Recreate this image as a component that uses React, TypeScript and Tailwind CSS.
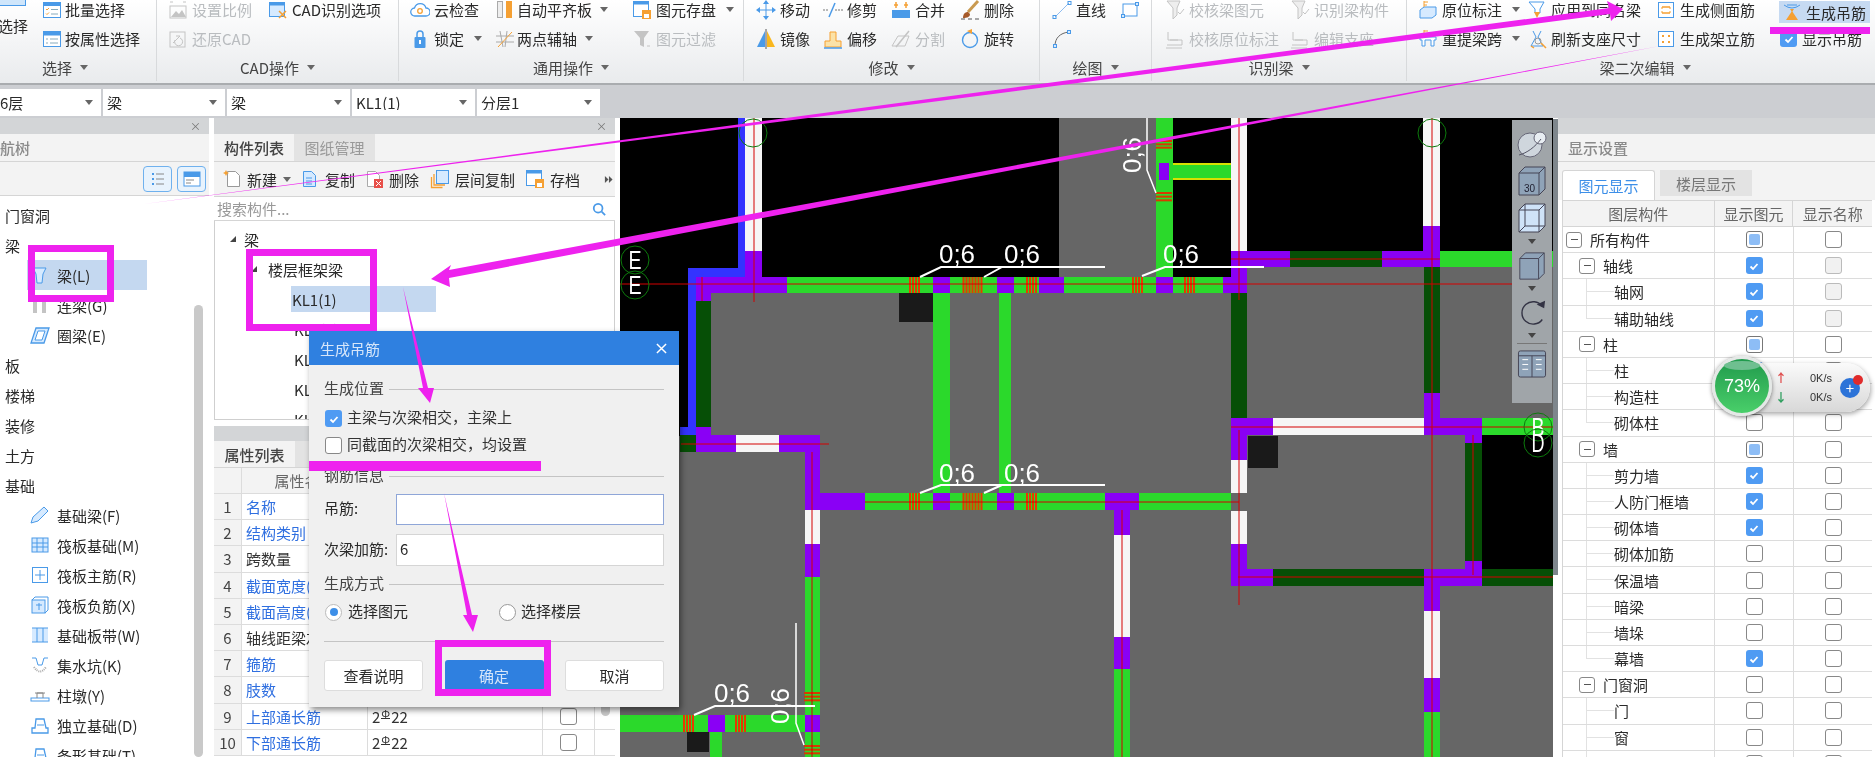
import React from "react";

type IP = { children?: React.ReactNode };
const S = ({ children }: IP) => (
  <svg viewBox="0 0 20 20" fill="none" className="w-[20px] h-[20px] shrink-0">{children}</svg>
);
const BL = "#4a9ae8", OR = "#f5a033", GR = "#c4c4c4", LB = "#d6eaff";

const I: Record<string, React.ReactNode> = {
  batch: <S><rect x="1.5" y="2.5" width="17" height="15" fill="#fff" stroke={BL} /><rect x="1.5" y="2.5" width="17" height="3.5" fill={BL} /><path d="M4 9l1 1 2-2M4 13.500l1 1 2-2" stroke={OR} /><path d="M9 9.500h7M9 14h7" stroke="#8ab" /></S>,
  attr: <S><rect x="1.5" y="2.5" width="17" height="15" fill="#fff" stroke={BL} /><rect x="1.5" y="2.5" width="17" height="4" fill={BL} /><path d="M4 10h2M8 10h8M4 14h2M8 14h8" stroke="#8ab" /></S>,
  ratio: <S><rect x="2" y="6" width="16" height="12" stroke={GR} /><path d="M3 17l5-6 3 3 3-4 4 7z" fill={GR} /><path d="M2 2h3M15 2h3" stroke={GR} /></S>,
  cad: <S><rect x="1.500" y="2.500" width="15" height="14" fill={LB} stroke={BL} /><rect x="1.5" y="2.5" width="15" height="3" fill={BL} /><path d="M11 11l7 7M18 11l-7 7" stroke={OR} strokeWidth="1.500" /></S>,
  restore: <S><rect x="2" y="3" width="15" height="15" stroke={GR} /><path d="M5 14l7-7M12 7H8M7 11a4 4 0 1 0 5-2" stroke={GR} /></S>,
  cloud: <S><path d="M5 16a4 4 0 0 1-.5-8A6 6 0 0 1 16 8a4 4 0 0 1 0 8z" fill="#fff" stroke={BL} strokeWidth="1.300" /><circle cx="10" cy="11" r="2.300" stroke={OR} strokeWidth="1.300" /></S>,
  align: <S><rect x="2.500" y="1.500" width="5" height="16" fill="#eee" stroke="#aaa" /><rect x="11" y="1" width="6" height="17" fill={OR} /></S>,
  lock: <S><rect x="4.500" y="8" width="11" height="11" rx="1" fill={BL} /><path d="M7 8V5a3 3 0 0 1 6 0v3" stroke={BL} strokeWidth="1.500" /><path d="M10 11v4" stroke="#fff" strokeWidth="2" /></S>,
  axis: <S><path d="M5 2l3 16M12 2l-2 16M1 7h18M1 13h18" stroke="#aaa" /><path d="M17 3L3 18" stroke={OR} /></S>,
  store: <S><rect x="1.500" y="1.500" width="15" height="15" fill="#fff" stroke={BL} /><rect x="1.5" y="1.500" width="15" height="3" fill={BL} /><rect x="10" y="10" width="9" height="9" fill={OR} /><rect x="12" y="14" width="5" height="4" fill="#fff" /></S>,
  filter: <S><path d="M2 2h15l-5 7v9l-4-2V9z" fill={GR} /><path d="M15 17h3" stroke={GR} /></S>,
  move: <S><path d="M10 3v14M3 10h14" stroke={BL} /><path d="M10 0l3 4H7zM10 20l3-4H7zM0 10l4-3v6zM20 10l-4-3v6z" fill={BL} /></S>,
  trim: <S><path d="M0 10h6M12 10h8" stroke="#777" strokeDasharray="2 1" /><path d="M6 17l6-14" stroke={BL} strokeWidth="1.500" /></S>,
  merge: <S><rect x="1" y="10" width="18" height="8" fill={BL} /><path d="M5 2v6M15 2v6M3 5h4M13 5h4" stroke={OR} strokeWidth="1.500" /></S>,
  brush: <S><path d="M18 1L8 12" stroke="#c99a50" strokeWidth="3" /><path d="M3 18c0-4 2-6 5-6l2 2c0 3-3 4-7 4z" fill="#a65a2a" /><path d="M1 19h18" stroke="#555" strokeDasharray="4 3" /></S>,
  mirror: <S><path d="M9 2L1 18h8z" fill={BL} /><path d="M11 2l8 16h-8z" fill="#f9b71e" /><path d="M10 0v20" stroke="#555" /></S>,
  offset: <S><path d="M2 18v-6h5V3h6v9h5v6z" fill="#fbe2a8" stroke={OR} /><path d="M1 19h18" stroke={BL} strokeWidth="1.500" /></S>,
  split: <S><path d="M1 17l6-10h11l-4 10z" stroke={GR} /><path d="M18 2L5 18" stroke={GR} strokeWidth="1.500" /></S>,
  rotate: <S><circle cx="10" cy="11" r="7.500" stroke={BL} strokeWidth="1.400" /><path d="M7 2l5-2v5z" fill={OR} /></S>,
  line: <S><path d="M3 17L17 3" stroke="#8fbcef" /><rect x="1" y="15.500" width="3" height="3" stroke={BL} /><rect x="16" y="1.500" width="3" height="3" stroke={BL} /></S>,
  rect: <S><rect x="3" y="4" width="14" height="12" stroke={BL} fill="#fff" /><rect x="1.500" y="14.500" width="3" height="3" fill={LB} stroke={BL} /><rect x="15.500" y="2.500" width="3" height="3" fill={LB} stroke={BL} /></S>,
  curve: <S><path d="M3 17C3 9 8 4 17 3" stroke="#666" /><rect x="1.500" y="15.500" width="3" height="3" fill={LB} stroke={BL} /><rect x="15.500" y="1.500" width="3" height="3" fill={LB} stroke={BL} /></S>,
  ck1: <S><path d="M2 1h13l-3 7v7l-4 4v-11z" stroke={GR} fill="#eee" /><path d="M13 12l2 2 4-5" stroke={GR} /></S>,
  ck2: <S><path d="M3 3v8h10M2 16h15v-5H5" stroke={GR} /><path d="M1 19h16" stroke={GR} /></S>,
  orig: <S><path d="M2 10l4-3h12v8l-4 3H2z" fill={LB} stroke={BL} /><path d="M6 1v6M6 2h4M6 5h3" stroke={OR} /></S>,
  apply: <S><path d="M2 2h15l-4 7v4H8V9z" fill="#fff" stroke={BL} /><path d="M7 12h6l-3 6z" fill={OR} /></S>,
  respan: <S><path d="M2 8h16v3h-2v6h-3v-6H7v6H4v-6H2z" fill="#fff" stroke={BL} /><path d="M6 1v6M6 2h4" stroke={OR} /></S>,
  refresh: <S><path d="M6 2l3 6-5 9h12l-5-9 3-6" stroke={BL} /><circle cx="11" cy="12" r="3" stroke="#999" /><path d="M4 17l3 2M14 14l5 5" stroke={OR} strokeWidth="1.500" /></S>,
  side: <S><rect x="2.500" y="2.500" width="15" height="15" fill="#fff" stroke={BL} /><path d="M6 7h8M6 13h8" stroke={OR} strokeWidth="1.500" /><path d="M6 7v2M14 7v2M6 11v2M14 11v2" stroke={OR} /></S>,
  erect: <S><rect x="2.500" y="2.500" width="15" height="15" fill="#fff" stroke={BL} /><path d="M7 6v2M13 6v2M7 12v2M13 12v2" stroke={OR} strokeWidth="2" /></S>,
  hang: <S><path d="M2 3q8 6 16 0" stroke={BL} /><path d="M5 3h10" stroke={BL} /><path d="M10 9l6 9H4z" fill={OR} /><path d="M8 7h4l-2 3z" fill={OR} /></S>,
  newdoc: <S><path d="M5.500 2.500h8l4 4v11h-12z" fill="#fff" stroke="#999" /><path d="M4 1l1 2 2 1-2 1-1 2-1-2-2-1 2-1z" fill={OR} /></S>,
  copydoc: <S><path d="M3.500 2.500h8l4 4v11h-12z" fill={LB} stroke={BL} /><path d="M6 9h6M6 12h6M6 15h6" stroke={BL} /></S>,
  deldoc: <S><path d="M3.500 2.500h8l4 4v11h-12z" fill="#fff" stroke="#aaa" /><rect x="10" y="10" width="9" height="9" fill="#e8504a" /><path d="M12 12l5 5M17 12l-5 5" stroke="#fff" /></S>,
  layer: <S><rect x="6.500" y="1.500" width="12" height="13" fill={LB} stroke={BL} /><path d="M4 5v11h11M1.500 8v10.500h11" stroke={OR} strokeWidth="1.300" /></S>,
};

const Caret = ({ c = "ml-[6px]" }: { c?: string }) => (
  <svg viewBox="0 0 8 5" className={"w-[8px] h-[5px] shrink-0 " + c}><path d="M0 0h8L4 5z" fill="#666" /></svg>
);

const Item = ({ icon, text, w, gray, caret, gap = "gap-[4px]" }: { icon: string; text?: string; w: string; gray?: boolean; caret?: boolean; gap?: string }) => (
  <div className={`flex items-center shrink-0 ${gap} ${w} ${gray ? "text-[#b9bcbf]" : ""}`}>
    {I[icon]}
    {text && <span className="whitespace-nowrap">{text}</span>}
    {caret && <Caret />}
  </div>
);

const Group = ({ w, pad, label, last, rows }: { w: string; pad: string; label: string; last?: boolean; rows: React.ReactNode[] }) => (
  <div className={`${w} shrink-0 h-[81px] flex flex-col ${last ? "" : "border-r border-[#d8dadc]"}`}>
    <div className={`flex h-[29px] items-center -mt-[5px] ${pad}`}>{rows[0]}</div>
    <div className={`flex h-[29px] items-center ${pad}`}>{rows[1]}</div>
    <div className="flex-1 flex items-center justify-center text-[#444] mt-[1px]">{label}<Caret c="ml-[8px]" /></div>
  </div>
);

const Ribbon = () => (
  <div className="h-[85px] shrink-0 bg-gradient-to-b from-[#ffffff] to-[#e9ebed] border-b-2 border-[#a9acaf] flex overflow-hidden">
    <div className="-ml-[26px] w-[183px] shrink-0 h-[81px] relative border-r border-[#d8dadc] flex">
      <div className="w-[68px] pl-[24px] shrink-0 flex flex-col">
        <div className="h-[6px] w-[28px] bg-[#cfe6fb] border-b border-r border-[#4a9ae8]" />
        <div className="mt-[12px]">选择</div>
      </div>
      <div className="flex-1 flex flex-col">
        <div className="h-[29px] -mt-[5px] flex items-center"><Item icon="batch" text="批量选择" w="w-[110px]" gap="gap-[3px]" /></div>
        <div className="h-[29px] flex items-center"><Item icon="attr" text="按属性选择" w="w-[110px]" gap="gap-[3px]" /></div>
      </div>
      <div className="absolute left-[68px] top-[60px] flex items-center text-[#444]">选择<Caret c="ml-[8px]" /></div>
    </div>
    <Group w="w-[242px]" pad="pl-[11px]" label="CAD操作" rows={[
      <><Item icon="ratio" text="设置比例" w="w-[100px]" gray /><Item icon="cad" text="CAD识别选项" w="w-[125px]" /></>,
      <Item icon="restore" text="还原CAD" w="w-[100px]" gray />,
    ]} />
    <Group w="w-[345px]" pad="pl-[11px]" label="通用操作" rows={[
      <><Item icon="cloud" text="云检查" w="w-[85px]" /><Item icon="align" text="自动平齐板" w="w-[137px]" caret gap="gap-[2px]" /><Item icon="store" text="图元存盘" w="w-[105px]" caret /></>,
      <><Item icon="lock" text="锁定" w="w-[85px]" caret /><Item icon="axis" text="两点辅轴" w="w-[137px]" caret gap="gap-[2px]" /><Item icon="filter" text="图元过滤" w="w-[105px]" gray /></>,
    ]} />
    <Group w="w-[296px]" pad="pl-[12px]" label="修改" rows={[
      <><Item icon="move" text="移动" w="w-[67px]" /><Item icon="trim" text="修剪" w="w-[68px]" /><Item icon="merge" text="合并" w="w-[69px]" /><Item icon="brush" text="删除" w="w-[60px]" /></>,
      <><Item icon="mirror" text="镜像" w="w-[67px]" /><Item icon="offset" text="偏移" w="w-[68px]" /><Item icon="split" text="分割" w="w-[69px]" gray /><Item icon="rotate" text="旋转" w="w-[60px]" /></>,
    ]} />
    <Group w="w-[112px]" pad="pl-[12px]" label="绘图" rows={[
      <><Item icon="line" text="直线" w="w-[68px]" /><Item icon="rect" w="w-[20px]" /></>,
      <Item icon="curve" w="w-[20px]" />,
    ]} />
    <Group w="w-[255px]" pad="pl-[13px]" label="识别梁" rows={[
      <><Item icon="ck1" text="校核梁图元" w="w-[125px]" gray /><Item icon="ck1" text="识别梁构件" w="w-[110px]" gray /></>,
      <><Item icon="ck2" text="校核原位标注" w="w-[125px]" gray /><Item icon="ck2" text="编辑支座" w="w-[110px]" gray /></>,
    ]} />
    <Group w="w-[476px]" pad="pl-[11px]" label="梁二次编辑" last rows={[
      <><Item icon="orig" text="原位标注" w="w-[109px]" caret /><Item icon="apply" text="应用到同名梁" w="w-[129px]" /><Item icon="side" text="生成侧面筋" w="w-[123px]" />
        <div className="w-[91px] h-[22px] mt-[5px] bg-[#c6daf2] flex items-center pl-[3px] gap-[4px] shrink-0">{I.hang}<span className="whitespace-nowrap">生成吊筋</span></div></>,
      <><Item icon="respan" text="重提梁跨" w="w-[109px]" caret /><Item icon="refresh" text="刷新支座尺寸" w="w-[129px]" /><Item icon="erect" text="生成架立筋" w="w-[123px]" />
        <div className="flex items-center gap-[5px] pl-[1px]"><Box t="check" /><span className="whitespace-nowrap">显示吊筋</span></div></>,
    ]} />
  </div>
);

const Combo = ({ t, w }: { t: string; w: string }) => (
  <div className={`${w} h-[27px] bg-white flex items-center justify-between pl-[4px] pr-[8px] shrink-0`}>
    <span className="truncate">{t}</span><Caret c="" />
  </div>
);

const Bar = () => (
  <div className="h-[33px] shrink-0 bg-[#ccced2] pt-[4px] flex gap-[2px]">
    <div className="w-[101px] h-[27px] bg-white flex items-center justify-between pr-[8px] shrink-0"><span>6层</span><Caret c="" /></div>
    <Combo t="梁" w="w-[122px]" /><Combo t="梁" w="w-[123px]" /><Combo t="KL1(1)" w="w-[123px]" /><Combo t="分层1" w="w-[123px]" />
  </div>
);

function Box({ t }: { t: "check" | "indet" | "none" | "dis" }) {
  if (t === "check")
    return <span className="w-[17px] h-[17px] rounded-[3px] bg-[#4f9bf3] flex items-center justify-center shrink-0"><svg viewBox="0 0 12 12" className="w-[12px] h-[12px]"><path d="M2.500 6.500l2.500 2.500 4.500-5" stroke="#fff" strokeWidth="1.800" fill="none" /></svg></span>;
  if (t === "indet")
    return <span className="w-[17px] h-[17px] rounded-[3px] border border-[#777] bg-white p-[2px] shrink-0 block"><span className="block w-full h-full bg-[#8dbdf6] rounded-[2px]" /></span>;
  if (t === "dis") return <span className="w-[17px] h-[17px] rounded-[3px] border border-[#bbb] bg-[#f1f1f1] shrink-0 block" />;
  return <span className="w-[17px] h-[17px] rounded-[3px] border border-[#888] bg-white shrink-0 block" />;
}

const PanelStrip = ({ x }: { x?: boolean }) => (
  <div className="h-[16px] shrink-0 bg-[#d3d5d7] flex items-center justify-end pr-[8px] text-[#777] text-[11px]">{x ? "×" : ""}</div>
);

const LI: Record<string, React.ReactNode> = {
  beam: <S><path d="M3 3h13l-3 6-1 9H7L6 9z" stroke={BL} fill={LB} /></S>,
  link: <S><rect x="3" y="2" width="4" height="16" fill={GR} /><rect x="12" y="2" width="4" height="16" fill={GR} /></S>,
  ring: <S><path d="M6 3h13l-5 15H1z" stroke={BL} fill={LB} strokeWidth="1.300" /><path d="M8 6h7l-3 9H5z" stroke={BL} fill="#fff" /></S>,
  pencil: <S><path d="M1 18l2-6L14 2l4 4L8 16z" fill={LB} stroke={BL} /></S>,
  raft: <S><rect x="2" y="3" width="16" height="14" fill={LB} stroke={BL} /><path d="M2 8h16M2 12h16M7 3v14M13 3v14" stroke={BL} /></S>,
  main: <S><rect x="2.500" y="2.500" width="15" height="15" stroke={BL} /><path d="M10 5v10M5 10h10" stroke={BL} /></S>,
  neg: <S><rect x="2" y="5" width="13" height="13" fill={LB} stroke={BL} /><path d="M2 5l3-3h13v13l-3 3M6 10h6M9 8v7" stroke={BL} /></S>,
  strip: <S><rect x="2" y="3" width="16" height="14" fill={LB} /><path d="M2 3h16M2 17h16M7 3v14M13 3v14" stroke={BL} /></S>,
  pit: <S><path d="M2 3h4l2 7h4l2-7h4" stroke={BL} /><path d="M4 12q6 9 12 0" stroke="#aaa" strokeDasharray="1 1" strokeWidth="2" /></S>,
  pier: <S><rect x="1" y="13" width="18" height="3" stroke={BL} /><path d="M7 13V8h6v5M5 8h10" stroke="#888" /></S>,
  found: <S><path d="M2 18v-5h3l1-9h8l2 9h2v5z" fill="#fff" stroke={BL} strokeWidth="1.300" /><path d="M7 10h7" stroke={BL} /></S>,
};

const Leaf = ({ icon, t, sel }: { icon: string; t: string; sel?: boolean }) => (
  <div className={`h-[30px] ml-[27px] w-[120px] flex items-center pl-[3px] ${sel ? "bg-[#c4d8f0]" : ""}`}>
    <div className="w-[27px] shrink-0 flex">{LI[icon]}</div><span className="whitespace-nowrap">{t}</span>
  </div>
);
const Cat = ({ t }: { t: string }) => <div className="h-[30px] pl-[5px] flex items-center">{t}</div>;

const LeftPanel = () => (
  <div className="w-[209px] shrink-0 flex flex-col bg-white overflow-hidden">
    <PanelStrip x />
    <div className="h-[28px] shrink-0 bg-[#f3f3f3] border-b border-[#d5d5d5] flex items-center text-[#8a8a8a] font-medium"><span>航树</span></div>
    <div className="h-[34px] shrink-0 bg-[#f3f3f3] border-b border-[#d5d5d5] flex items-center justify-end gap-[5px] pr-[3px]">
      <span className="w-[29px] h-[26px] rounded-[4px] border border-[#6fb1ee] bg-[#e8f3fd] flex items-center justify-center"><svg viewBox="0 0 16 16" className="w-[16px] h-[16px]"><path d="M2 3h2M2 8h2M2 13h2" stroke="#4a9ae8" strokeWidth="2" /><path d="M6 3h8M6 8h8M6 13h8" stroke="#888" /></svg></span>
      <span className="w-[29px] h-[26px] rounded-[4px] border border-[#6fb1ee] bg-[#e8f3fd] flex items-center justify-center"><svg viewBox="0 0 18 16" className="w-[18px] h-[16px]"><rect x="1" y="1" width="16" height="14" fill="#fff" stroke="#4a9ae8" /><rect x="1" y="1" width="16" height="5" fill="#4a9ae8" /><path d="M3 9h8M3 12h5" stroke="#888" /></svg></span>
    </div>
    <div className="flex-1 relative pt-[4px] overflow-hidden">
      <Cat t="门窗洞" /><Cat t="梁" />
      <Leaf icon="beam" t="梁(L)" sel /><Leaf icon="link" t="连梁(G)" /><Leaf icon="ring" t="圈梁(E)" />
      <Cat t="板" /><Cat t="楼梯" /><Cat t="装修" /><Cat t="土方" /><Cat t="基础" />
      <Leaf icon="pencil" t="基础梁(F)" /><Leaf icon="raft" t="筏板基础(M)" /><Leaf icon="main" t="筏板主筋(R)" /><Leaf icon="neg" t="筏板负筋(X)" /><Leaf icon="strip" t="基础板带(W)" /><Leaf icon="pit" t="集水坑(K)" /><Leaf icon="pier" t="柱墩(Y)" /><Leaf icon="found" t="独立基础(D)" /><Leaf icon="found" t="条形基础(T)" />
      <div className="absolute left-[194px] top-[109px] bottom-0 w-[9px] rounded-full bg-[#c9c9c9]" />
    </div>
  </div>
);

const ToolBtn = ({ d, t, w }: { d: React.ReactNode; t: string; w: string }) => (
  <div className={`flex items-center gap-[5px] shrink-0 ${w}`}>{d}<span className="whitespace-nowrap">{t}</span></div>
);

const Props: [string, boolean, string][] = [
  ["名称", true, ""], ["结构类别", true, ""], ["跨数量", false, ""], ["截面宽度(mm)", true, ""], ["截面高度(mm)", true, ""], ["轴线距梁左线距离", false, ""], ["箍筋", true, ""], ["肢数", true, ""], ["上部通长筋", true, "2"], ["下部通长筋", true, "2"],
];

const MiddlePanel = () => (
  <div className="w-[401px] shrink-0 flex flex-col bg-white overflow-hidden">
    <PanelStrip x />
    <div className="h-[28px] shrink-0 bg-[#f3f3f3] border-b border-[#d5d5d5] flex">
      <div className="w-[80px] bg-[#f3f3f3] flex items-center justify-center font-medium text-[#444]">构件列表</div>
      <div className="w-[81px] bg-[#e3e3e3] flex items-center justify-center text-[#999]">图纸管理</div>
    </div>
    <div className="h-[35px] shrink-0 bg-[#f3f3f3] border-b border-[#d5d5d5] flex items-center pl-[8px]">
      <div className="flex items-center shrink-0 w-[78px]">{I.newdoc}<span className="ml-[5px]">新建</span><Caret /></div>
      <ToolBtn d={I.copydoc} t="复制" w="w-[64px]" />
      <ToolBtn d={I.deldoc} t="删除" w="w-[66px]" />
      <ToolBtn d={I.layer} t="层间复制" w="w-[95px]" />
      <ToolBtn d={I.store} t="存档" w="w-[79px]" />
      <svg viewBox="0 0 10 10" className="w-[9px] h-[9px]"><path d="M1 1l4 4-4 4zM5.500 1l4 4-4 4z" fill="#555" /></svg>
    </div>
    <div className="h-[24px] shrink-0 border-b border-[#d5d5d5] flex items-center justify-between px-[3px] text-[#999]">
      <span>搜索构件...</span>
      <svg viewBox="0 0 16 16" className="w-[14px] h-[14px] mr-[6px]"><circle cx="7" cy="7" r="5" stroke="#4a9ae8" strokeWidth="2" fill="none" /><path d="M11 11l4 4" stroke="#4a9ae8" strokeWidth="2" /></svg>
    </div>
    <div className="h-[199px] shrink-0 border border-t-0 border-[#cfcfcf] overflow-hidden pt-[3px]">
      <div className="h-[30px] flex items-center pl-[15px] gap-[8px]"><span className="w-0 h-0 border-l-[6px] border-b-[6px] border-l-transparent border-b-[#444]" /><span>梁</span></div>
      <div className="h-[30px] flex items-center pl-[36px] gap-[11px]"><span className="w-0 h-0 border-l-[6px] border-b-[6px] border-l-transparent border-b-[#444]" /><span>楼层框架梁</span></div>
      <div className="h-[26px] my-[2px] ml-[76px] w-[145px] bg-[#c4d8f0] flex items-center pl-[1px]">KL1(1)</div>
      <div className="h-[30px] flex items-center pl-[79px]">KL2(1)</div>
      <div className="h-[30px] flex items-center pl-[79px]">KL3(1)</div>
      <div className="h-[30px] flex items-center pl-[79px]">KL4(1)</div>
      <div className="h-[30px] flex items-center pl-[79px]">KL5(1)</div>
    </div>
    <div className="h-[6px] shrink-0" />
    <div className="h-[15px] shrink-0 bg-[#d3d5d7]" />
    <div className="h-[27px] shrink-0 bg-[#f3f3f3] border-b border-[#d5d5d5] flex">
      <div className="w-[81px] flex items-center justify-center font-medium text-[#444]">属性列表</div>
      <div className="w-[81px] bg-[#e3e3e3]" />
    </div>
    <div className="flex-1 relative overflow-hidden">
      <div className="flex h-[26px] bg-[#f3f3f3] border-b border-[#dcdcdc] text-[#666]">
        <div className="w-[28px] border-r border-[#dcdcdc]" />
        <div className="w-[126px] border-r border-[#dcdcdc] flex items-center justify-center">属性名称</div>
      </div>
      {Props.map(([n, blue, v], i) => (
        <div key={n} className="flex h-[26.2px] border-b border-[#dcdcdc] items-stretch">
          <div className="w-[28px] shrink-0 bg-[#f3f3f3] border-r border-[#dcdcdc] flex items-center justify-center text-[#444]">{i + 1}</div>
          <div className={`w-[126px] shrink-0 border-r border-[#dcdcdc] flex items-center pl-[4px] whitespace-nowrap overflow-hidden ${blue ? "text-[#2f6fe0]" : "text-[#333]"}`}>{n}</div>
          <div className="w-[175px] shrink-0 border-r border-[#dcdcdc] flex items-center pl-[4px] text-[#333]">{v && <>{v}<span className="text-[11px] relative -top-[3px] mx-[1px] border-b border-[#333] leading-[10px]">Φ</span>22</>}</div>
          <div className="w-[52px] shrink-0 border-r border-[#dcdcdc] flex items-center justify-center">{v && <Box t="none" />}</div>
        </div>
      ))}
      <div className="absolute left-[387px] top-[221px] w-[9px] h-[27px] rounded-full bg-[#c9c9c9]" />
    </div>
  </div>
);

const RowsRight: [number, string, "check" | "indet" | "none", "none" | "dis", boolean?][] = [
  [0, "所有构件", "indet", "none"], [1, "轴线", "check", "dis"], [2, "轴网", "check", "dis"], [2, "辅助轴线", "check", "dis", true],
  [1, "柱", "indet", "none"], [2, "柱", "check", "none"], [2, "构造柱", "check", "none"], [2, "砌体柱", "none", "none", true],
  [1, "墙", "indet", "none"], [2, "剪力墙", "check", "none"], [2, "人防门框墙", "check", "none"], [2, "砌体墙", "check", "none"], [2, "砌体加筋", "none", "none"], [2, "保温墙", "none", "none"], [2, "暗梁", "none", "none"], [2, "墙垛", "none", "none"], [2, "幕墙", "check", "none", true],
  [1, "门窗洞", "none", "none"], [2, "门", "none", "none"], [2, "窗", "none", "none"], [2, "墙洞", "none", "none"],
];

const Minus = () => <span className="w-[16px] h-[16px] rounded-[3px] border border-[#888] bg-white flex items-center justify-center shrink-0"><span className="w-[7px] h-px bg-[#555]" /></span>;

const RightPanel = () => (
  <div className="w-[317px] shrink-0 flex flex-col bg-white overflow-hidden">
    <PanelStrip />
    <div className="h-[28px] shrink-0 bg-[#f3f3f3] border-b border-[#d5d5d5] flex items-center pl-[10px] text-[#8a8a8a] font-medium">显示设置</div>
    <div className="h-[38px] shrink-0 bg-[#f3f3f3] flex items-end pl-[4px] gap-[5px] pb-[4px]">
      <div className="w-[93px] h-[30px] -mb-[4px] bg-white border border-b-0 border-[#d5d5d5] rounded-t-[3px] flex items-center justify-center text-[#3d8fe8]">图元显示</div>
      <div className="w-[92px] h-[26px] bg-[#e3e3e3] flex items-center justify-center text-[#777]">楼层显示</div>
    </div>
    <div className="ml-[4px] mr-[3px] border-l border-[#d5d5d5] flex-1 overflow-hidden">
      <div className="flex h-[27px] bg-[#f3f3f3] border-y border-[#d5d5d5] text-[#666]">
        <div className="w-[152px] flex items-center justify-center border-r border-[#d5d5d5]">图层构件</div>
        <div className="w-[79px] flex items-center justify-center border-r border-[#d5d5d5]">显示图元</div>
        <div className="w-[79px] flex items-center justify-center">显示名称</div>
      </div>
      {RowsRight.map(([lv, t, a, b, last], i) => (
        <div key={i} className="flex h-[26.2px] border-b border-[#dcdcdc]">
          <div className="w-[152px] shrink-0 flex items-center border-r border-[#dcdcdc]">
            {lv === 0 && <div className="pl-[3px] flex items-center gap-[8px]"><Minus /><span>{t}</span></div>}
            {lv === 1 && <div className="pl-[16px] flex items-center gap-[8px]"><Minus /><span>{t}</span></div>}
            {lv === 2 && <div className="pl-[23px] flex items-center h-full">
              <div className={`w-[28px] self-start border-l border-[#e2e2e2] ${last ? "h-[13px]" : "h-full"}`}><div className="h-[13px] border-b border-[#e2e2e2]" /></div>
              <span className="whitespace-nowrap">{t}</span></div>}
          </div>
          <div className="w-[79px] shrink-0 flex items-center justify-center border-r border-[#dcdcdc]"><Box t={a} /></div>
          <div className="w-[79px] shrink-0 flex items-center justify-center"><Box t={b} /></div>
        </div>
      ))}
    </div>
  </div>
);

const P = "#8a00f5", G = "#2bd92b", D = "#064f06", W = "#f6f6f6", B = "#3333ff", K = "#000", Q = "#1a1a1a", R = "#d40000";
const CR: [number, number, number, number, string][] = [
  [620, 118, 1059, 277, K], [620, 118, 688, 436, K], [1173, 118, 1231, 277, K], [1247, 118, 1553, 251, K], [1482, 435, 1553, 569, K],
  [738, 118, 745, 277, B], [745, 118, 762, 251, W], [745, 251, 762, 293, P], [688, 268, 738, 277, B], [688, 268, 696, 430, B],
  [696, 277, 787, 293, P], [696, 293, 711, 301, P], [696, 301, 711, 427, D], [696, 427, 711, 435, P], [680, 427, 696, 435, B], [680, 435, 696, 452, D],
  [696, 435, 736, 452, P], [736, 435, 779, 452, W], [779, 435, 820, 452, P], [805, 452, 820, 510, P],
  [787, 277, 1226, 293, G], [933, 293, 950, 493, G], [999, 293, 1011, 493, G], [933, 277, 950, 293, P], [997, 277, 1014, 293, P], [1039, 277, 1064, 293, P], [1156, 277, 1173, 293, P], [1223, 277, 1247, 293, P],
  [899, 293, 933, 322, Q], [1156, 118, 1173, 277, G], [1173, 163, 1238, 180, G], [1173, 163, 1238, 165, "#d8e000"], [1173, 178, 1238, 180, "#d8e000"], [1159, 163, 1169, 180, P],
  [1231, 118, 1247, 251, W], [1231, 251, 1290, 267, P], [1290, 251, 1382, 267, D], [1382, 251, 1440, 267, P], [1440, 251, 1553, 267, G], [1423, 118, 1440, 226, W], [1423, 226, 1440, 251, P],
  [1231, 267, 1247, 293, P], [1231, 293, 1247, 418, D], [1424, 267, 1440, 393, D], [1424, 393, 1440, 418, P],
  [1231, 418, 1273, 435, P], [1273, 418, 1424, 435, W], [1424, 418, 1482, 435, P], [1482, 418, 1553, 435, G],
  [1231, 435, 1247, 460, P], [1231, 460, 1247, 493, W], [1231, 511, 1247, 544, W], [1231, 544, 1247, 569, P], [1231, 569, 1273, 586, P], [1273, 569, 1424, 586, D], [1424, 569, 1482, 586, P], [1482, 569, 1553, 586, D],
  [1465, 443, 1482, 561, D], [1465, 435, 1482, 443, P], [1465, 561, 1482, 569, P], [1248, 436, 1278, 468, Q],
  [1424, 586, 1440, 611, P], [1424, 611, 1440, 678, W], [1424, 678, 1440, 712, P], [1424, 712, 1440, 757, G],
  [1114, 510, 1130, 535, P], [1114, 535, 1130, 637, W], [1114, 637, 1130, 669, P], [1114, 669, 1130, 757, G],
  [865, 493, 1231, 510, G], [805, 493, 865, 510, P], [933, 493, 950, 510, P], [997, 493, 1014, 510, P], [1105, 493, 1139, 510, P],
  [805, 510, 820, 544, W], [805, 544, 820, 577, P], [805, 577, 820, 757, G], [805, 715, 820, 732, P],
  [620, 715, 805, 732, G], [708, 715, 725, 732, P], [687, 732, 709, 752, Q], [710, 732, 722, 757, G],
];
const RL: [number, number, number, number][] = [
  [620, 284, 1512, 284], [865, 502, 1239, 502], [754, 118, 754, 302], [1239, 118, 1239, 300], [1432, 118, 1432, 757], [1239, 430, 1239, 605], [1122, 510, 1122, 757], [812, 452, 812, 757], [681, 444, 829, 444], [1231, 427, 1553, 427], [1231, 259, 1440, 259], [1238, 577, 1553, 577], [1473, 435, 1473, 575], [702, 277, 702, 301],
];
const HV: [number, number, number, number][] = [
  [915, 277, 293, 4], [973, 277, 293, 7], [1032, 277, 293, 4], [1138, 277, 293, 4], [1190, 277, 293, 4],
  [915, 493, 510, 4], [973, 493, 510, 7], [1032, 493, 510, 4], [689, 715, 732, 4], [741, 715, 732, 4],
];
const HH: [number, number, number][] = [[1164, 140, 150], [1164, 192, 203], [812, 692, 703], [812, 745, 756]];
const AX: [number, number, string][] = [[635, 260, "E"], [635, 285, "E"], [753, 133, ""], [1432, 133, ""], [1538, 427, "B"], [1538, 443, "D"]];
const LB06: [number, number][] = [[957, 263], [1022, 263], [1181, 263], [957, 482], [1022, 482], [732, 702]];

const Cad = () => (
  <svg viewBox="620 118 933 639" className="block w-[933px] h-[639px]">
    <rect x="620" y="118" width="933" height="639" fill="#666" />
    {CR.map(([a, b, c, d, f], i) => <rect key={i} x={a} y={b} width={c - a} height={d - b} fill={f} />)}
    {HV.map(([x, a, b, n], i) => <g key={i} fill="#e63a00">{Array.from({ length: n }, (_, k) => <rect key={k} x={x - (n * 3) / 2 + k * 3} y={a} width="2" height={b - a} />)}</g>)}
    {HH.map(([x, a, b], i) => <g key={i} fill="#d83a00">{[0, 1, 2].map((o) => <rect key={o} x={x - 8} y={a + o * ((b - a) / 3)} width="16" height="2" />)}</g>)}
    {RL.map(([a, b, c, d], i) => <line key={i} x1={a} y1={b} x2={c} y2={d} stroke={R} strokeWidth="1" />)}
    <g stroke="#fff" strokeWidth="2" fill="none">
      <path d="M920 277L941 267H1105M984 277L1002 267M1142 276L1165 267H1264M920 493L941 485H1105M984 493L1002 485M694 715L715 706H815" />
      <path d="M1147 118V170L1156 193M796 623V723L804 745" strokeWidth="1.500" />
    </g>
    <g fontFamily="'Liberation Sans',sans-serif" fontSize="26" fill="#fff" textAnchor="middle">
      {LB06.map(([x, y], i) => <text key={i} x={x} y={y}>0;6</text>)}
      <text transform="translate(1141 155) rotate(-90)" y="0">0;6</text>
      <text transform="translate(789 706) rotate(-90)" y="0">0;6</text>
    </g>
    {AX.map(([x, y, t], i) => (
      <g key={i}>
        <circle cx={x} cy={y} r="14" fill="none" stroke="#0c7a0c" strokeWidth="1" />
        {t && <text x={x} y={y + 9} textAnchor="middle" fontSize="25" fill="#fff" fontFamily="'Liberation Sans',sans-serif" textLength="13" lengthAdjust="spacingAndGlyphs">{t}</text>}
      </g>
    ))}
  </svg>
);

const CadTools = () => (
  <div className="absolute right-[1px] top-[2px] w-[40px] h-[283px] bg-[#a0a5a9] flex flex-col items-center pt-[9px]">
    <svg viewBox="0 0 30 30" className="w-[30px] h-[30px]"><circle cx="13" cy="16" r="12" fill="#cfd6dd" stroke="#667" /><circle cx="23" cy="9" r="6" fill="#e8edf2" stroke="#667" /><path d="M2 26C10 24 18 18 24 10" stroke="#556" fill="none" /></svg>
    <svg viewBox="0 0 30 32" className="w-[30px] h-[32px] mt-[6px]"><path d="M2 8l6-6h20v22l-6 6H2z" fill="#8fa3b8" stroke="#445" /><path d="M2 8h20v22M22 8l6-6" stroke="#445" fill="none" /><text x="7" y="27" fontSize="10" fill="#223" fontFamily="'Liberation Sans',sans-serif">30</text></svg>
    <svg viewBox="0 0 30 32" className="w-[30px] h-[32px] mt-[5px]"><path d="M2 8l6-6h20v22l-6 6H2z" fill="#cfe3f8" stroke="#445" /><path d="M2 8h20v22M22 8l6-6M8 2v22h20M8 24l-6 6" stroke="#445" fill="none" /></svg>
    <span className="mt-[5px] w-0 h-0 border-x-[4px] border-t-[5px] border-x-transparent border-t-[#444]" />
    <svg viewBox="0 0 30 32" className="w-[30px] h-[30px] mt-[7px]"><path d="M2 8l6-6h20v22l-6 6H2z" fill="#8fa3b8" stroke="#445" /><path d="M2 8h20v22M22 8l6-6" stroke="#445" fill="none" /></svg>
    <span className="mt-[5px] w-0 h-0 border-x-[4px] border-t-[5px] border-x-transparent border-t-[#444]" />
    <svg viewBox="0 0 30 32" className="w-[28px] h-[30px] mt-[6px]"><path d="M26 10A12 12 0 1 0 26 24" stroke="#334" strokeWidth="1.500" fill="none" /><path d="M20 8l8 4 1-8z" fill="#334" /></svg>
    <span className="mt-[6px] w-0 h-0 border-x-[4px] border-t-[5px] border-x-transparent border-t-[#444]" />
    <div className="w-[30px] h-px bg-[#777] mt-[5px]" />
    <svg viewBox="0 0 30 30" className="w-[30px] h-[29px] mt-[5px]"><rect x="1" y="2" width="28" height="27" rx="2" fill="#8fa3b8" stroke="#445" /><path d="M1 7h28M15 7v22" stroke="#445" /><path d="M5 11h6M5 16h6M5 21h6M19 11h6M19 16h6M19 21h6" stroke="#fff" /></svg>
  </div>
);

const Up = "relative -top-[2px]";
const Section = ({ t }: { t: string }) => (
  <div className="h-[24px] flex items-center gap-[5px] shrink-0"><span className={`whitespace-nowrap text-[#444] ${Up}`}>{t}</span><span className="flex-1 h-px bg-[#c4c4c4]" /></div>
);

const Dialog = () => (
  <div className="absolute left-[309px] top-[331px] w-[370px] h-[376px] bg-[#f0f0f0] shadow-[2px_3px_6px_rgba(0,0,0,0.45)] z-10 flex flex-col">
    <div className="h-[34px] shrink-0 bg-[#2f80e0] flex items-center justify-between pl-[11px] pr-[12px] text-[#d6e6fa]">
      <span>生成吊筋</span>
      <svg viewBox="0 0 12 12" className="w-[11px] h-[11px]"><path d="M1 1l10 10M11 1L1 11" stroke="#fff" strokeWidth="1.600" /></svg>
    </div>
    <div className="px-[15px] pt-[12px] flex flex-col flex-1">
      <Section t="生成位置" />
      <div className="mt-[4px] h-[27px] flex items-center gap-[5px] pl-[1px] text-[#333]"><Box t="check" /><span className={Up}>主梁与次梁相交，主梁上</span></div>
      <div className="h-[27px] flex items-center gap-[5px] pl-[1px] text-[#333]"><Box t="none" /><span className={Up}>同截面的次梁相交，均设置</span></div>
      <div className="mt-[5px]"><Section t="钢筋信息" /></div>
      <div className="mt-[6px] h-[31px] flex items-center"><span className={`w-[72px] shrink-0 ${Up}`}>吊筋:</span><div className="flex-1 h-full bg-white border border-[#8fa6d8]" /></div>
      <div className="mt-[9px] h-[32px] flex items-center"><span className={`w-[72px] shrink-0 ${Up}`}>次梁加筋:</span><div className="flex-1 h-full bg-white border border-[#d5d5d5] flex items-center pl-[3px]"><span className={Up}>6</span></div></div>
      <div className="mt-[6px]"><Section t="生成方式" /></div>
      <div className="mt-[4px] h-[24px] flex items-center pl-[1px]">
        <span className="w-[17px] h-[17px] rounded-full border border-[#bbb] bg-white flex items-center justify-center shrink-0"><span className="w-[8px] h-[8px] rounded-full bg-[#3d8fe8]" /></span>
        <span className={`ml-[6px] w-[151px] ${Up}`}>选择图元</span>
        <span className="w-[17px] h-[17px] rounded-full border border-[#999] bg-white shrink-0" />
        <span className={`ml-[5px] ${Up}`}>选择楼层</span>
      </div>
      <div className="mt-[17px] h-px bg-[#c4c4c4] shrink-0" />
      <div className="mt-[18px] h-[31px] flex justify-between">
        <div className="w-[99px] bg-white border border-[#ddd] rounded-[3px] flex items-center justify-center">查看说明</div>
        <div className="w-[99px] bg-[#2f80e0] rounded-[3px] flex items-center justify-center text-[#d6e6fa]">确定</div>
        <div className="w-[99px] bg-white border border-[#ddd] rounded-[3px] flex items-center justify-center">取消</div>
      </div>
    </div>
  </div>
);

const Widget = () => (
  <div className="absolute left-[1712px] top-[356px] w-[160px] h-[62px] z-10 pointer-events-none">
    <div className="absolute left-[30px] top-[7px] right-[2px] h-[49px] rounded-r-[25px] bg-gradient-to-b from-[#fafafa] to-[#d8d8d8] shadow-[1px_2px_5px_rgba(0,0,0,0.35)] flex items-center">
      <div className="flex flex-col items-end w-[90px] text-[11px] leading-[19px] text-[#333] font-['Liberation_Sans',sans-serif]"><span>0K/s</span><span>0K/s</span></div>
      <div className="ml-[8px] w-[20px] h-[20px] rounded-full bg-[#2c73d8] flex items-center justify-center text-white text-[15px] leading-none relative">+<span className="absolute -right-[3px] -top-[3px] w-[10px] h-[10px] rounded-full bg-[#e02b2b]" /></div>
      <span className="absolute left-[33px] top-[9px] text-[12px] font-bold text-[#e05050] leading-none">↑</span>
      <span className="absolute left-[33px] top-[28px] text-[12px] font-bold text-[#2e9e5e] leading-none">↓</span>
    </div>
    <div className="absolute left-0 top-0 w-[60px] h-[60px] rounded-full border-[3px] border-[#e4e8e6] bg-gradient-to-b from-[#1f9a4c] to-[#49cf6a] shadow-[0_1px_4px_rgba(0,0,0,0.5)] flex items-center justify-center text-white text-[18px] font-['Liberation_Sans',sans-serif]">
      <span className="absolute top-[2px] left-[9px] w-[36px] h-[9px] rounded-[50%] bg-[#6fbf90]" />
      <span className="relative">73%</span>
    </div>
  </div>
);

const C = "#ee22ee";
const Notes = () => (
  <svg viewBox="0 0 1875 757" className="absolute inset-0 w-[1875px] h-[757px] z-20 pointer-events-none">
    <rect x="1770" y="27" width="100" height="7" fill={C} />
    <rect x="309" y="461" width="232" height="10" fill={C} />
    <rect x="31.500" y="248.500" width="79" height="50" fill="none" stroke={C} strokeWidth="7" />
    <rect x="249.500" y="252.500" width="124" height="75" fill="none" stroke={C} strokeWidth="7" />
    <rect x="438.500" y="643.500" width="109" height="49" fill="none" stroke={C} strokeWidth="7" />
    <path d="M144 204L1609 8L1607 1L1623 9L1611 21L1610 14Z" fill={C} />
    <path d="M1660 46L449 270L451 265L431 279L450 287L449 278Z" fill={C} />
    <path d="M403 287L423 388L418 388L430 403L434 388L428 388Z" fill={C} />
    <path d="M444 493L467 615L463 615L473 632L478 615L472 615Z" fill={C} />
  </svg>
);

export default function App() {
  return (
    <div className="relative w-[1875px] h-[757px] overflow-hidden bg-white text-[15px] leading-none text-[#2a2a2a] font-['Noto_Sans_CJK_SC','Noto_Sans',sans-serif] flex flex-col blur-[0.4px]">
      <Ribbon />
      <Bar />
      <div className="flex h-[639px]">
        <LeftPanel />
        <div className="w-[5px] shrink-0 bg-white" />
        <MiddlePanel />
        <div className="w-[5px] shrink-0 bg-white" />
        <div className="relative w-[933px] shrink-0"><Cad /><CadTools /></div>
        <div className="w-[5px] shrink-0 bg-white"><div className="mt-[1px] h-[456px] bg-[#7e868c]" /></div>
        <RightPanel />
      </div>
      <Dialog />
      <Widget />
      <Notes />
    </div>
  );
}
